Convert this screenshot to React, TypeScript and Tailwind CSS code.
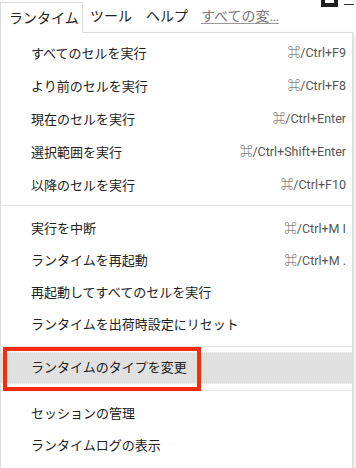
const font = { fontFamily: 'Roboto, "Noto Sans CJK JP", sans-serif' };

type Item = { label: string; shortcut?: string };

const group1: Item[] = [
  { label: 'すべてのセルを実行', shortcut: '⌘/Ctrl+F9' },
  { label: 'より前のセルを実行', shortcut: '⌘/Ctrl+F8' },
  { label: '現在のセルを実行', shortcut: '⌘/Ctrl+Enter' },
  { label: '選択範囲を実行', shortcut: '⌘/Ctrl+Shift+Enter' },
  { label: '以降のセルを実行', shortcut: '⌘/Ctrl+F10' },
];

const group2: Item[] = [
  { label: '実行を中断', shortcut: '⌘/Ctrl+M I' },
  { label: 'ランタイムを再起動', shortcut: '⌘/Ctrl+M .' },
  { label: '再起動してすべてのセルを実行' },
  { label: 'ランタイムを出荷時設定にリセット' },
];

const group3: Item[] = [{ label: 'セッションの管理' }, { label: 'ランタイムログの表示' }];

function Row({ item, tall }: { item: Item; tall?: boolean }) {
  return (
    <div className={`flex items-center justify-between pl-[30px] pr-[6px] ${tall ? 'h-[33px]' : 'h-[32px]'}`}>
      <span className="text-[13px] text-[#212121]">{item.label}</span>
      {item.shortcut && <span className="text-[12.5px] text-[#555]">{item.shortcut}</span>}
    </div>
  );
}

export default function App() {
  return (
    <div className="relative w-[356px] h-[468px] overflow-hidden bg-white" style={font}>
      {/* top right toolbar fragment */}
      <div className="absolute top-0 left-[321px] w-[17px] h-[7px] border-[4px] border-t-0 border-[#1e1e1e]" />
      <div className="absolute top-[4px] left-[344px] w-[10px] h-px bg-[#333]" />

      {/* menu bar */}
      <div className="flex items-end h-[32px]">
        <div className="h-[31px] w-[83px] border border-b-0 border-[#dcdcdc] bg-white flex items-center pl-[8px] text-[14px] text-[#212121] relative z-10 -mb-px">
          ランタイム
        </div>
        <div className="h-[31px] flex items-center text-[14px] text-[#212121]">
          <span className="ml-[7px]">ツール</span>
          <span className="ml-[14px]">ヘルプ</span>
          <span className="ml-[13px] text-[#777] underline underline-offset-2 decoration-[#999]">すべての変…</span>
        </div>
      </div>

      {/* dropdown */}
      <div className="w-[353px] border border-[#dcdcdc] bg-white shadow-[2px_2px_4px_rgba(0,0,0,0.12)] pt-[4px] pb-[20px]">
        {group1.map((it) => (
          <Row key={it.label} item={it} tall />
        ))}
        <div className="mt-[3px] mb-[7px] h-px bg-[#e4e4e4]" />
        {group2.map((it) => (
          <Row key={it.label} item={it} />
        ))}
        <div className="mt-[5px] mb-[5px] h-px bg-[#e4e4e4]" />
        <div className="relative">
          <div className="h-[32px] bg-[#e0e0e0] border-y border-dotted border-[#f4f4f4] flex items-center pl-[30px]">
            <span className="text-[13px] text-[#212121]">ランタイムのタイプを変更</span>
          </div>
          <div className="absolute left-[2px] top-[-5px] w-[198px] h-[44px] border-[4px] border-[#fb2a0c]" />
        </div>
        <div className="mt-[6px] mb-[6px] h-px bg-[#e4e4e4]" />
        <div className="pt-[1px]">
          {group3.map((it) => (
            <Row key={it.label} item={it} />
          ))}
        </div>
      </div>
    </div>
  );
}
